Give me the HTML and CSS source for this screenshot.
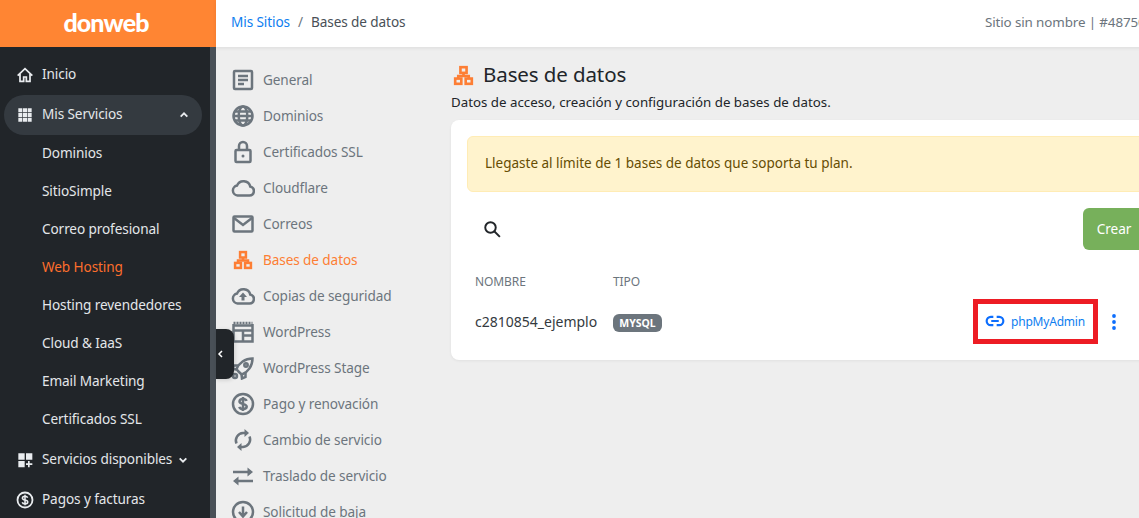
FILE: index.html
```html
<!DOCTYPE html>
<html lang="es">
<head>
<meta charset="utf-8">
<title>Bases de datos</title>
<link rel="stylesheet" href="styles.css">
</head>
<body>
<div class="app">
  <aside class="sidebar">
    <div class="logo">donweb</div>
    <nav class="nav">
      <a class="nav-item"><svg class="nav-icon nav-home" viewBox="0 0 24 24"><path d="M1 13 12 2.500 23 13M4.500 10.500V21.500h5.500V15h4v6.500h5.500V10.500"/></svg><span class="label">Inicio</span></a>
      <a class="nav-item nav-open"><svg class="nav-icon" viewBox="0 0 24 24"><path d="M2 2h6v6H2zM9 2h6v6H9zM16 2h6v6h-6zM2 9h6v6H2zM9 9h6v6H9zM16 9h6v6h-6zM2 16h6v6H2zM9 16h6v6H9zM16 16h6v6h-6z"/></svg><span class="label">Mis Servicios</span><svg class="chev chev-up" viewBox="0 0 12 12"><path d="M2 8l4-4 4 4"/></svg></a>
      <a class="sub-item"><span class="label">Dominios</span></a>
      <a class="sub-item"><span class="label">SitioSimple</span></a>
      <a class="sub-item"><span class="label">Correo profesional</span></a>
      <a class="sub-item sub-active"><span class="label">Web Hosting</span></a>
      <a class="sub-item"><span class="label">Hosting revendedores</span></a>
      <a class="sub-item"><span class="label">Cloud &amp; IaaS</span></a>
      <a class="sub-item"><span class="label">Email Marketing</span></a>
      <a class="sub-item"><span class="label">Certificados SSL</span></a>
      <a class="nav-item nav-avail"><svg class="nav-icon" viewBox="0 0 24 24"><path d="M2 2h9.500v9.500H2zM13.500 2H23v9.500h-9.500zM2 13.500h9.500V23H2zM16.500 13.500h2.500v3.500h4v2.500h-4V23h-2.500v-3.500h-3V17h3z"/></svg><span class="label">Servicios disponibles</span><svg class="chev" viewBox="0 0 12 12"><path d="M2 4l4 4 4-4"/></svg></a>
      <a class="nav-item nav-pay"><svg class="nav-icon nav-icon-lg" viewBox="0 0 24 24"><circle cx="12" cy="12" r="10" fill="none" stroke="#e9ecef" stroke-width="2.400"/><path class="dollar-light" d="M15.500 9c-.4-1.300-1.700-2-3.500-2-2 0-3.500 1-3.500 2.600 0 3.400 7.200 1.600 7.200 5 0 1.500-1.600 2.500-3.700 2.500-1.900 0-3.300-.8-3.700-2.200M12 5v14"/></svg><span class="label">Pagos y facturas</span></a>
    </nav>
  </aside>
  <div class="content">
    <header class="topbar">
      <div class="crumbs"><a class="crumb-link">Mis Sitios</a><span class="crumb-sep">/</span><span>Bases de datos</span></div>
      <div class="site">Sitio sin nombre | #487502</div>
    </header>
    <div class="body">
      <nav class="menu">
        <a class="menu-item"><svg class="menu-icon" viewBox="0 0 24 24"><rect x="3" y="3" width="18" height="18" rx="1"/><path d="M7 8h10M7 12h10M7 16h6"/></svg>General</a>
        <a class="menu-item"><svg class="menu-icon" viewBox="0 0 24 24"><circle cx="12" cy="12" r="9.500"/><ellipse cx="12" cy="12" rx="4.300" ry="9.500"/><path d="M2.500 12h19M3.800 7.500h16.400M3.800 16.500h16.400"/></svg>Dominios</a>
        <a class="menu-item"><svg class="menu-icon" viewBox="0 0 24 24"><rect x="4.500" y="10" width="15" height="12" rx="1"/><path d="M8 10V6a4 4 0 0 1 8 0v4"/><circle class="dot" cx="12" cy="16" r="1.500"/></svg>Certificados SSL</a>
        <a class="menu-item"><svg class="menu-icon" viewBox="0 0 24 24"><path d="M6.500 19.500h12a4.500 4.500 0 0 0 .8-8.900 7 7 0 0 0-13.300-1 5 5 0 0 0 .5 9.900z"/></svg>Cloudflare</a>
        <a class="menu-item"><svg class="menu-icon" viewBox="0 0 24 24"><rect x="2.500" y="4.500" width="19" height="15" rx="1"/><path d="M3 6l9 7 9-7"/></svg>Correos</a>
        <a class="menu-item menu-active"><svg class="menu-icon menu-icon-org" viewBox="0 0 24 24"><rect x="8.500" y="2.500" width="7" height="6.500"/><rect x="2.500" y="15.500" width="7" height="6"/><rect x="14.500" y="15.500" width="7" height="6"/><path d="M12 9v3.500M6 15.500v-3h12v3"/></svg>Bases de datos</a>
        <a class="menu-item"><svg class="menu-icon" viewBox="0 0 24 24"><path d="M6.500 19.500h12a4.500 4.500 0 0 0 .8-8.900 7 7 0 0 0-13.300-1 5 5 0 0 0 .5 9.900z"/><path class="dot" d="M12 8.500l4 4.500h-2.500v3.500h-3V13H8z"/></svg>Copias de seguridad</a>
        <a class="menu-item"><svg class="menu-icon" viewBox="0 0 24 24"><path d="M2.500 4v17.500h19V4"/><path d="M2 5.500h20M12 10.500h9.500M12 15.500h9.500M12 10v11M2.500 10.500H12"/><path d="M2.500 3h19" stroke-dasharray="2 1"/></svg>WordPress</a>
        <a class="menu-item"><svg class="menu-icon" viewBox="0 0 24 24"><path d="M8 16c-1-1-2-2-2.500-3C8 7 14 2.500 21.500 2.500 21.500 10 17 16 11 18.500c-1-.5-2-1.500-3-2.500z"/><path d="M7 9.500H3L1.500 13l4 .5M14.500 17v4L11 22.500l-.5-4"/><circle cx="15" cy="9" r="1.700"/><circle cx="4" cy="20" r="2"/></svg>WordPress Stage</a>
        <a class="menu-item"><svg class="menu-icon" viewBox="0 0 24 24"><circle cx="12" cy="12" r="10"/><path d="M15.500 9c-.4-1.300-1.700-2-3.500-2-2 0-3.500 1-3.500 2.600 0 3.400 7.200 1.600 7.200 5 0 1.500-1.600 2.500-3.700 2.500-1.900 0-3.300-.8-3.700-2.200M12 5v14"/></svg>Pago y renovación</a>
        <a class="menu-item"><svg class="menu-icon" viewBox="0 0 24 24"><path d="M5.500 15.500a7.500 7.500 0 0 1 6.500-10.500h2M18.500 8.500a7.500 7.500 0 0 1-6.500 10.500h-2"/><path class="dot" d="M13.500 1l4.500 4-4.500 4zM10.500 15l-4.500 4 4.500 4z"/></svg>Cambio de servicio</a>
        <a class="menu-item"><svg class="menu-icon" viewBox="0 0 24 24"><path d="M2 8h18M4 17h18"/><path class="dot" d="M16.500 3.500 22 8l-5.500 4.500zM7.500 12.500 2 17l5.500 4.500z"/></svg>Traslado de servicio</a>
        <a class="menu-item"><svg class="menu-icon" viewBox="0 0 24 24"><circle cx="12" cy="12" r="10"/><path d="M12 6.500v9M8 12l4 4.500 4-4.500"/></svg>Solicitud de baja</a>
      </nav>
      <main class="main">
        <div class="title-row">
          <svg class="title-icon" viewBox="0 0 24 24"><rect x="8.500" y="2.500" width="7" height="6.500"/><rect x="2.500" y="15.500" width="7" height="6"/><rect x="14.500" y="15.500" width="7" height="6"/><path d="M12 9v3.500M6 15.500v-3h12v3"/></svg>
          <h1 class="title">Bases de datos</h1>
        </div>
        <p class="subtitle">Datos de acceso, creación y configuración de bases de datos.</p>
        <section class="card">
          <div class="alert">Llegaste al límite de 1 bases de datos que soporta tu plan.</div>
          <div class="toolbar">
            <svg class="search" viewBox="0 0 24 24"><circle cx="10" cy="10" r="7"/><path d="M15 15l7.500 7.500"/></svg>
            <button class="create">Crear</button>
          </div>
          <div class="cols"><span class="col-name">NOMBRE</span><span>TIPO</span></div>
          <div class="row">
            <span class="col-name db-name">c2810854_ejemplo</span>
            <span class="badge">MYSQL</span>
            <a class="pma"><svg class="link-icon" viewBox="0 0 24 24"><path d="M10 7H7a5 5 0 0 0 0 10h3M14 7h3a5 5 0 0 1 0 10h-3M7.500 12h9"/></svg>phpMyAdmin</a>
            <svg class="kebab" viewBox="0 0 4 16"><circle cx="2" cy="2" r="1.900"/><circle cx="2" cy="8" r="1.900"/><circle cx="2" cy="14" r="1.900"/></svg>
          </div>
        </section>
      </main>
    </div>
  </div>
  <button class="collapse"><svg viewBox="0 0 12 12"><path d="M8 2 4 6l4 4"/></svg></button>
</div>
</body>
</html>
```

FILE: styles.css
```css
* { box-sizing: border-box; }
html, body { margin: 0; height: 100%; overflow: hidden; }
body { font-family: "Noto Sans", sans-serif; font-size: 13.600px; letter-spacing: -.1px; background: #eee; color: #212529; }
a { display: flex; align-items: center; text-decoration: none; }

.app { position: relative; display: flex; width: 1300px; height: 518px; overflow: hidden; }

.sidebar { width: 216px; flex: none; display: flex; flex-direction: column; overflow: hidden; }
.logo { height: 47px; flex: none; background: #ff8533; color: #fff; font: 900 25px "Lato", sans-serif; letter-spacing: -.9px; line-height: 45px; text-align: center; padding-right: 4px; }
.nav { flex: 1; background: #212529; border-right: 6px solid #495057; padding: 8px 8px 0 4px; color: #e4e7ea; }
.nav-item { height: 40px; padding-left: 13px; }
.label { margin-bottom: 3px; }
.nav-icon { width: 16px; height: 16px; margin-right: 9px; fill: #e9ecef; flex: none; }
.nav-home { fill: none; stroke: #e9ecef; stroke-width: 2.600; }
.nav-icon-lg { width: 18px; height: 18px; margin: 0 8px 0 -1px; }
.dollar-light { fill: none; stroke: #e9ecef; stroke-width: 2; }
.nav-open { background: #343a40; border-radius: 20px; }
.chev { width: 10px; height: 10px; fill: none; stroke: #e9ecef; stroke-width: 2.200; margin-left: 6px; }
.chev-up { margin-left: auto; margin-right: 13px; }
.sub-item { height: 38px; padding-left: 38px; }
.sub-active { color: #fd6e2c; }
.nav-avail { margin-top: 1px; }

.content { flex: 1; display: flex; flex-direction: column; min-width: 0; }
.topbar { height: 47px; flex: none; background: #fff; display: flex; justify-content: space-between; align-items: center; padding: 0 0 4px 15px; box-shadow: 0 1px 4px rgba(0,0,0,.08); position: relative; color: #495057; }
.crumbs { display: flex; align-items: center; }
.crumb-link { color: #0d7ef0; }
.crumb-sep { margin: 0 8px; color: #6c757d; }
.site { color: #6c757d; width: 315px; font-size: 13.400px; letter-spacing: -.12px; }

.body { flex: 1; display: flex; min-height: 0; }
.menu { width: 219px; flex: none; padding-top: 15px; }
.menu-item { height: 36px; color: #6c757d; padding-bottom: 1px; }
.menu-icon { width: 24px; height: 24px; margin: 0 8px 0 15px; fill: none; stroke: #6c757d; stroke-width: 2.500; flex: none; }
.menu-icon .dot { fill: #6c757d; stroke: none; }
.menu-active { color: #fd7e34; }
.menu-icon-org { stroke: #fd7e34; width: 20px; height: 20px; margin: 0 10px 0 17px; stroke-width: 3; }

.main { width: 710px; flex: none; margin-left: 16px; }
.title-row { display: flex; align-items: center; height: 28px; margin-top: 14px; }
.title-icon { width: 21px; height: 21px; margin: 0 9px 0 2px; fill: none; stroke: #fd7e34; stroke-width: 3; }
.title { margin: -2px 0 0; font-size: 20.500px; font-weight: 400; letter-spacing: -.1px; color: #212529; }
.subtitle { margin: 4px 0 9px; font-size: 13.300px; letter-spacing: 0; line-height: 18px; color: #212529; }

.card { background: #fff; border-radius: 8px; padding: 16px; height: 240px; box-shadow: 0 1px 3px rgba(0,0,0,.06); }
.alert { height: 56px; background: #fff3cd; border: 1px solid #ffecb5; border-radius: 6px; padding: 0 0 2px 17px; display: flex; align-items: center; color: #664d03; font-size: 13.500px; letter-spacing: 0; }
.toolbar { display: flex; justify-content: space-between; align-items: center; margin-top: 16px; height: 42px; padding-left: 16px; }
.search { width: 18px; height: 18px; fill: none; stroke: #212529; stroke-width: 2.600; }
.create { width: 62px; height: 42px; border: 0; border-radius: 6px; background: #77b05b; color: #fff; font: 13.600px "Noto Sans", sans-serif; letter-spacing: -.1px; padding: 0 0 2px; }
.cols { display: flex; margin-top: 22px; padding-left: 8px; height: 18px; align-items: center; font-size: 12px; letter-spacing: -.1px; color: #6c757d; }
.col-name { width: 138px; flex: none; }
.row { display: flex; align-items: center; height: 46px; margin-top: 8px; padding-left: 8px; }
.db-name { font-size: 14px; letter-spacing: 0; color: #343a40; }
.badge { background: #6c757d; color: #fff; font-size: 10.500px; font-weight: 700; letter-spacing: 0; height: 18px; width: 49px; border-radius: 6px; display: flex; align-items: center; justify-content: center; margin-top: 3px; }
.pma { margin-left: 311px; height: 45px; width: 125px; border: 5px solid #ed1c24; padding-left: 7px; color: #0d7ef0; font-size: 12px; letter-spacing: -.2px; }
.link-icon { width: 20px; height: 20px; margin-right: 6px; fill: none; stroke: #0d6efd; stroke-width: 2.600; }
.kebab { width: 4px; height: 16px; margin: 2px 0 0 14px; fill: #0d6efd; }

.collapse { position: absolute; left: 216px; top: 329px; width: 18px; height: 50px; border: 0; padding: 0; background: #212529; border-radius: 0 8px 8px 0; display: flex; align-items: center; justify-content: center; box-shadow: 1px 1px 4px rgba(0,0,0,.15); }
.collapse svg { width: 12px; height: 12px; fill: none; stroke: #fff; stroke-width: 2; margin-right: 9px; }
```
